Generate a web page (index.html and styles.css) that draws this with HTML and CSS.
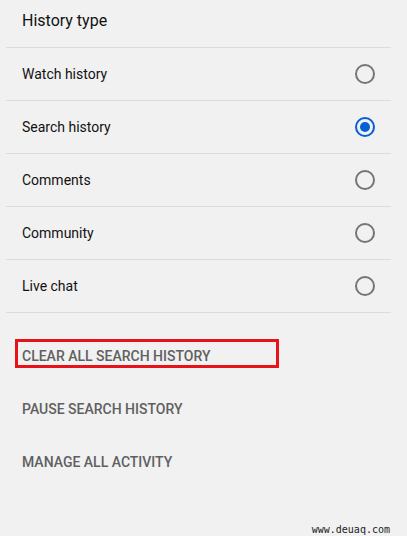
FILE: index.html
```html
<!DOCTYPE html>
<html lang="en">
<head>
  <meta charset="UTF-8" />
  <title>History type</title>
  <meta name="viewport" content="width=device-width, initial-scale=1.0" />
  <link rel="stylesheet" href="styles.css">
</head>
<body>
  <main class="panel">
    <h2 class="panel-title">History type</h2>

    <ul class="type-list">
      <li class="type-row">
        <span>Watch history</span>
        <span class="radio"></span>
      </li>
      <li class="type-row">
        <span>Search history</span>
        <span class="radio checked"></span>
      </li>
      <li class="type-row">
        <span>Comments</span>
        <span class="radio"></span>
      </li>
      <li class="type-row">
        <span>Community</span>
        <span class="radio"></span>
      </li>
      <li class="type-row">
        <span>Live chat</span>
        <span class="radio"></span>
      </li>
    </ul>

    <div class="actions">
      <a class="action highlighted">Clear all search history</a>
      <a class="action">Pause search history</a>
      <a class="action">Manage all activity</a>
    </div>
  </main>

  <footer class="watermark">www.deuaq.com</footer>
</body>
</html>
```

FILE: styles.css
```css
body {
  margin: 0;
  font-family: Roboto, "Liberation Sans", sans-serif;
  background-color: #f1f1f1;
  color: #111;
  height: 536px;
  position: relative;
  overflow: hidden;
}
.panel {
  width: 385px;
  margin-left: 6px;
}
.panel-title {
  margin: 0;
  height: 48px;
  padding: 11px 0 0 16px;
  box-sizing: border-box;
  font-size: 16px;
  font-weight: 400;
  line-height: 20px;
  color: #111;
  border-bottom: 1px solid #dcdcdc;
}
.type-list {
  list-style: none;
  margin: 0;
  padding: 0;
}
.type-row {
  height: 52px;
  display: flex;
  align-items: center;
  justify-content: space-between;
  padding: 0 16px;
  font-size: 14px;
  border-bottom: 1px solid #dcdcdc;
}
.radio {
  width: 20px;
  height: 20px;
  box-sizing: border-box;
  border: 2px solid #757575;
  border-radius: 50%;
  display: flex;
  align-items: center;
  justify-content: center;
}
.radio.checked {
  border-color: #065fd4;
}
.radio.checked::after {
  content: "";
  width: 10px;
  height: 10px;
  border-radius: 50%;
  background: #065fd4;
}
.actions {
  margin-top: 26px;
  display: flex;
  flex-direction: column;
  gap: 24px;
}
.action {
  display: block;
  margin-left: 9px;
  padding: 0 4px;
  width: 264px;
  height: 29px;
  box-sizing: border-box;
  line-height: 28px;
  font-size: 14px;
  font-weight: 500;
  text-transform: uppercase;
  color: #606060;
  border: 3px solid transparent;
}
.action.highlighted {
  border-color: #e8121b;
}
.watermark {
  position: absolute;
  right: 17px;
  bottom: 1px;
  font-family: "DejaVu Sans Mono", monospace;
  font-size: 10px;
  color: #222;
}
```
